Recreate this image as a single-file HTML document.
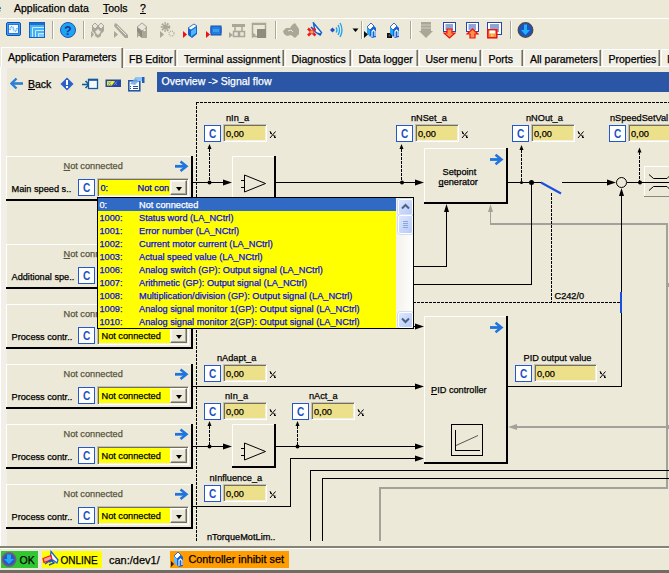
<!DOCTYPE html><html><head><meta charset="utf-8"><style>
html,body{margin:0;padding:0}
body{width:669px;height:573px;overflow:hidden;position:relative;background:#ECE9D8;font-family:"Liberation Sans", sans-serif;-webkit-font-smoothing:antialiased}
.t{position:absolute;white-space:pre;-webkit-text-stroke:0.25px currentColor}
.cb{position:absolute;width:15px;height:15px;border:1px solid #2258CC;background:#fff;color:#1B50C4;font-weight:bold;font-size:12.6px;line-height:16px;text-align:center}
.cb span{display:inline-block;transform:scaleX(0.8)}
.fld{position:absolute;height:18px;box-sizing:border-box;border-top:1px solid #C4C0AC;border-left:1px solid #C4C0AC;border-bottom:1px solid #fff;border-right:1px solid #fff;box-shadow:inset 1px 1px 0 #716F64, inset -1px -1px 0 #F1EFE2;background:#EDE08A}
.combo{position:absolute;height:19px;box-sizing:border-box;border-top:1px solid #C4C0AC;border-left:1px solid #C4C0AC;border-bottom:1px solid #fff;border-right:1px solid #fff;box-shadow:inset 1px 1px 0 #716F64, inset -1px -1px 0 #F1EFE2;background:#FFFF00}
.combo .dd{position:absolute;right:1px;top:1px;width:17px;height:15px;box-sizing:border-box;background:#ECE9D8;border-top:1px solid #fff;border-left:1px solid #fff;border-right:1px solid #716F64;border-bottom:1px solid #716F64;box-shadow:inset -1px -1px 0 #ACA899, inset 1px 1px 0 #F6F5EF}
.combo .dd:after{content:'';position:absolute;left:4.5px;top:5.5px;border-left:3.5px solid transparent;border-right:3.5px solid transparent;border-top:4px solid #000}
.sbtn{position:absolute;width:13px;background:linear-gradient(135deg,#DCE7FE,#B7CBF7);border:1px solid #fff;border-radius:2px;box-shadow:0 0 0 0.5px #B0C2EA}
svg{position:absolute;left:0;top:0}
u{text-decoration-skip-ink:none}
</style></head><body>
<div class="t " style="left:-5px;top:3.11px;font-size:10.5px;line-height:10.5px;color:#000;">e</div><div class="t " style="left:14px;top:3.11px;font-size:10.5px;line-height:10.5px;color:#000;">Application data</div><div class="t " style="left:103px;top:3.11px;font-size:10.5px;line-height:10.5px;color:#000;"><u>T</u>ools</div><div class="t " style="left:140px;top:3.11px;font-size:10.5px;line-height:10.5px;color:#000;"><u>?</u></div><div style="position:absolute;left:0px;top:18px;width:669px;height:1px;background:#fff"></div><div style="position:absolute;left:52px;top:21px;width:1px;height:18px;background:#ACA899"></div><div style="position:absolute;left:53px;top:21px;width:1px;height:18px;background:#fff"></div><div style="position:absolute;left:83px;top:21px;width:1px;height:18px;background:#ACA899"></div><div style="position:absolute;left:84px;top:21px;width:1px;height:18px;background:#fff"></div><div style="position:absolute;left:275px;top:21px;width:1px;height:18px;background:#ACA899"></div><div style="position:absolute;left:276px;top:21px;width:1px;height:18px;background:#fff"></div><div style="position:absolute;left:361px;top:21px;width:1px;height:18px;background:#ACA899"></div><div style="position:absolute;left:362px;top:21px;width:1px;height:18px;background:#fff"></div><div style="position:absolute;left:410px;top:21px;width:1px;height:18px;background:#ACA899"></div><div style="position:absolute;left:411px;top:21px;width:1px;height:18px;background:#fff"></div><div style="position:absolute;left:510px;top:21px;width:1px;height:18px;background:#ACA899"></div><div style="position:absolute;left:511px;top:21px;width:1px;height:18px;background:#fff"></div><svg style="position:absolute;left:6px;top:22px" width="16" height="15" viewBox="0 0 16 15"><rect x="0.5" y="0.5" width="14" height="13" rx="1.5" fill="#3AA2F2" stroke="#0F4FB8"/><rect x="2.5" y="2.5" width="10" height="9" fill="#F4FAFF" stroke="#1560C8" stroke-width="0.8"/><path d="M4,8 C4,4 7.5,4 7.5,7 C7.5,10 11,10 11,6" stroke="#5AAEF0" stroke-width="1.6" fill="none" stroke-dasharray="1 0.6"/></svg><svg style="position:absolute;left:29px;top:22px" width="17" height="17" viewBox="0 0 17 17"><rect x="0.5" y="0.5" width="15" height="15" fill="#47B2F4" stroke="#1A5CC0"/><rect x="1" y="1" width="14" height="2" fill="#1A6FD0"/><path d="M3.5,15V5.5H15M6.5,15V8.5H15M9.5,15V11.5H15" stroke="#C6EBFF" stroke-width="1" fill="none"/><rect x="10" y="12" width="5" height="3" fill="#7CCBFA"/></svg><svg style="position:absolute;left:60px;top:22px" width="17" height="17" viewBox="0 0 17 17"><circle cx="8" cy="8" r="7.5" fill="#18A6F2" stroke="#2350B8"/><text x="8" y="12.5" font-family="Liberation Sans" font-weight="bold" font-size="12" text-anchor="middle" fill="#2B2A8C">?</text></svg><svg style="position:absolute;left:90px;top:22px" width="17" height="17" viewBox="0 0 17 17"><path d="M5,1L8,4L5,7L2,4Z M11,1L14,4L11,7L8,4Z" fill="#E9E7DD" stroke="#A9A797"/><path d="M2,4V9L5,12L8,9L11,12L14,9V4L11,7L8,4L5,7Z" fill="#A9A797"/><path d="M8,7L11,10L8,13L5,10Z" fill="#E9E7DD"/><path d="M5,10V14L8,16L11,14V10L8,13Z" fill="#A9A797"/><path d="M1,9L4,12.5L1,16Z" fill="#A9A797"/></svg><svg style="position:absolute;left:113px;top:22px" width="17" height="17" viewBox="0 0 17 17"><path d="M2,1L4,2L15,13L15,16L12,16L1,4Z" fill="#A9A797"/><path d="M4,4L13,13" stroke="#E9E7DD" stroke-width="1"/><path d="M1,9L5,12.5L1,16Z" fill="#A9A797"/></svg><svg style="position:absolute;left:136px;top:22px" width="15" height="17" viewBox="0 0 15 17"><path d="M6,1L11,5L11,16L6,12Z" fill="#A9A797"/><path d="M1,5L6,1L11,5L6,9Z" fill="#E9E7DD" stroke="#A9A797"/><path d="M1,5L6,9L6,16L1,12Z" fill="#8E8C7E"/><path d="M6,9L11,5V16L6,16Z" fill="#A9A797"/><circle cx="8.5" cy="8" r="1.2" fill="#E9E7DD"/><path d="M1,9L4,12.5L1,16Z" fill="#A9A797"/></svg><svg style="position:absolute;left:159px;top:22px" width="17" height="17" viewBox="0 0 17 17"><circle cx="6.5" cy="5" r="3.5" fill="none" stroke="#A9A797" stroke-width="2.5" stroke-dasharray="1.5 1"/><circle cx="6.5" cy="5" r="2.5" fill="#A9A797"/><circle cx="12.5" cy="11.5" r="2.5" fill="none" stroke="#A9A797" stroke-width="1.2" stroke-dasharray="1 1"/><path d="M1,9L5,12.5L1,16Z" fill="#A9A797"/></svg><svg style="position:absolute;left:182px;top:22px" width="17" height="17" viewBox="0 0 17 17"><path d="M1,9L5,12.5L1,16Z" fill="#F01010"/><path d="M6,6L12,2L15,4V12L10,16L6,13Z" fill="#1563D0"/><path d="M6,6L12,2L15,4L9,8Z" fill="#fff" stroke="#1563D0" stroke-width="0.8"/><path d="M9,9L14,5.5V11L9,14.5Z" fill="#4FB8F8"/></svg><svg style="position:absolute;left:205px;top:22px" width="17" height="17" viewBox="0 0 17 17"><path d="M1,9L5,12.5L1,16Z" fill="#F01010"/><rect x="6" y="4" width="10" height="9" fill="#1D7FE0" stroke="#1A4FB0" stroke-width="1"/><path d="M5,6H6M5,8H6M5,10H6M16,6H17M16,8H17M16,10H17" stroke="#1A4FB0"/><rect x="8" y="7" width="6" height="3" fill="#3E9AF0"/></svg><svg style="position:absolute;left:228px;top:22px" width="18" height="17" viewBox="0 0 18 17"><rect x="4" y="2" width="13" height="3" fill="#A9A797"/><path d="M7,5V9M14,5V9" stroke="#A9A797" stroke-width="1.5"/><rect x="5.5" y="9.5" width="5" height="5" fill="#E9E7DD" stroke="#A9A797" stroke-width="1.5"/><rect x="11.5" y="9.5" width="5" height="5" fill="#E9E7DD" stroke="#A9A797" stroke-width="1.5"/><path d="M1,10L5,13L1,16Z" fill="#A9A797"/></svg><svg style="position:absolute;left:251px;top:22px" width="17" height="17" viewBox="0 0 17 17"><rect x="1.5" y="1.5" width="13" height="13" fill="none" stroke="#A9A797" stroke-width="1.5"/><rect x="1" y="1" width="14" height="2" fill="#A9A797"/><rect x="6" y="7" width="9" height="9" fill="#8E8C7E"/><path d="M1,10L5,13L1,16Z" fill="#A9A797"/></svg><svg style="position:absolute;left:282px;top:22px" width="18" height="16" viewBox="0 0 18 16"><path d="M1,9L4,6H8L10,3L13,1L17,7L17,12L13,16L9,13L5,14L2,12Z" fill="#A9A797"/><path d="M6,9L9,8L11,10" stroke="#E9E7DD" stroke-width="1" fill="none"/></svg><svg style="position:absolute;left:306px;top:22px" width="17" height="15" viewBox="0 0 17 15"><path d="M7.5,1L15.5,10.5L14,13L9,9.5Z" fill="#fff" stroke="#1167D8" stroke-width="1.5"/><path d="M5,5L8,8" stroke="#1A4FB0" stroke-width="1.6"/><path d="M12,11L15,13" stroke="#1A4FB0" stroke-width="1.4"/><path d="M2,6.5L9.5,13.5M9.5,6.5L2,13.5" stroke="#F01818" stroke-width="2.6"/><rect x="4.3" y="8.5" width="3" height="3" fill="#F5A070"/></svg><svg style="position:absolute;left:329px;top:22px" width="15" height="17" viewBox="0 0 15 17"><path d="M1,8L3.5,5.5L6,8L3.5,10.5Z" fill="#2050C0"/><path d="M7,5.5Q9,8 7,10.5M9,3Q12,8 9,13M11,1Q15,8 11,15" stroke="#1AA0F2" stroke-width="1.3" fill="none"/></svg><svg style="position:absolute;left:352px;top:28px" width="7" height="5" viewBox="0 0 7 5"><path d="M0.5,0.5H6.5L3.5,4Z" fill="#000"/></svg><svg style="position:absolute;left:363px;top:22px" width="15" height="17" viewBox="0 0 15 17"><path d="M1,9L5,12.5L1,16Z" fill="#111"/><path d="M4,5L8,1L13,6L13,15L9,16L4,11Z" fill="#1565D6"/><path d="M4,5L8,1L11,4L7,8Z" fill="#fff" stroke="#1D4FB8" stroke-width="0.8"/><path d="M4,5L7,8L7,15L4,11Z" fill="#20A8F5"/><path d="M9,15V9.5L10.5,8L12,9.5V14" stroke="#fff" stroke-width="1.1" fill="none"/></svg><svg style="position:absolute;left:386px;top:22px" width="15" height="17" viewBox="0 0 15 17"><rect x="1" y="11" width="5" height="5" fill="#111"/><rect x="2.5" y="12.5" width="2" height="2" fill="#555"/><path d="M4,5L8,1L13,6L13,15L9,16L4,11Z" fill="#1565D6"/><path d="M4,5L8,1L11,4L7,8Z" fill="#fff" stroke="#1D4FB8" stroke-width="0.8"/><path d="M4,5L7,8L7,15L4,11Z" fill="#20A8F5"/><path d="M9,15V9.5L10.5,8L12,9.5V14" stroke="#fff" stroke-width="1.1" fill="none"/></svg><svg style="position:absolute;left:419px;top:22px" width="14" height="17" viewBox="0 0 14 17"><rect x="2" y="0" width="10" height="10" fill="#A9A797"/><path d="M2,3H12M2,6H12" stroke="#E9E7DD" stroke-width="0.6"/><path d="M0,9H14L7,16Z" fill="#A9A797"/></svg><svg style="position:absolute;left:443px;top:22px" width="13" height="17" viewBox="0 0 13 17"><rect x="0.5" y="0.5" width="12" height="9" fill="#fff" stroke="#2548A8"/><path d="M3,3H10M3,5H10M3,7H10" stroke="#2548A8" stroke-width="1"/><path d="M2,3H2.5M2,5H2.5M2,7H2.5" stroke="#2548A8"/><path d="M4,7H9V11H12L6.5,16L1,11H4Z" fill="#F5924A" stroke="#F01010" stroke-width="1.2"/></svg><svg style="position:absolute;left:466px;top:22px" width="13" height="17" viewBox="0 0 13 17"><rect x="0.5" y="0.5" width="12" height="9" fill="#fff" stroke="#2548A8"/><path d="M3,3H10M3,5H10M3,7H10" stroke="#2548A8" stroke-width="1"/><path d="M2,3H2.5M2,5H2.5M2,7H2.5" stroke="#2548A8"/><path d="M6.5,7L12,12H9V16H4V12H1Z" fill="#F5924A" stroke="#F01010" stroke-width="1.2"/></svg><svg style="position:absolute;left:487px;top:22px" width="16" height="17" viewBox="0 0 16 17"><rect x="0.5" y="0.5" width="14" height="12" fill="#fff" stroke="#2548A8"/><path d="M3,3H12M3,5H12M3,7H12M3,9H12" stroke="#2548A8" stroke-width="1"/><rect x="0.8" y="7.8" width="9" height="8" fill="#F5924A" stroke="#F01010" stroke-width="1.5"/><rect x="2.5" y="8.5" width="5.5" height="3" fill="#fff"/><rect x="4" y="12.5" width="2.5" height="2" fill="#FFE040"/></svg><svg style="position:absolute;left:517px;top:22px" width="17" height="17" viewBox="0 0 17 17"><circle cx="8.5" cy="8" r="7.2" fill="#1C52C2" stroke="#4A4A50" stroke-width="1.5"/><path d="M7,2.5H10V8H13L8.5,13L4,8H7Z" fill="#1EB0F8"/></svg><svg style="position:absolute;left:10px;top:77px" width="14" height="13" viewBox="0 0 14 13"><path d="M1,6.5H13" stroke="#2A7ED8" stroke-width="2.6"/><path d="M6.5,1.5L1.5,6.5L6.5,11.5" stroke="#2A7ED8" stroke-width="2.4" fill="none"/></svg><svg style="position:absolute;left:60px;top:77px" width="14" height="14" viewBox="0 0 14 14"><path d="M7,0.5L13.5,7L7,13.5L0.5,7Z" fill="#2B5FCB"/><rect x="6" y="3" width="2" height="5" fill="#fff"/><rect x="6" y="9" width="2" height="2" fill="#fff"/></svg><svg style="position:absolute;left:81px;top:78px" width="18" height="12" viewBox="0 0 18 12"><path d="M1,6.5H8" stroke="#135A9C" stroke-width="1.6"/><path d="M4.5,3L8,6.5L4.5,10" stroke="#135A9C" stroke-width="1.6" fill="none"/><rect x="7.5" y="1.5" width="9" height="9" fill="#F4F8FC" stroke="#135A9C" stroke-width="1.3"/><rect x="7" y="0.8" width="10" height="2" fill="#135A9C"/></svg><svg style="position:absolute;left:105px;top:79px" width="17" height="9" viewBox="0 0 17 9"><rect x="0.5" y="0.5" width="15.5" height="7.5" fill="#2447A0"/><path d="M2,2H10L7,6.5H2Z" fill="#F4F020"/><path d="M3,2.5L6,6M6,2.5L3,6M9,2.5L12,6M12,2.5L9,6" stroke="#6F8FD8" stroke-width="0.9"/></svg><svg style="position:absolute;left:127px;top:76px" width="18" height="16" viewBox="0 0 18 16"><rect x="1.8" y="4.8" width="11" height="10" fill="#fff" stroke="#1F4FA0" stroke-width="1.5"/><path d="M3,10.5H4M6,10.5H11M3,12.5H4M6,12.5H11" stroke="#1F4FA0" stroke-width="1"/><path d="M3,8L9,1L12,5L8,9Z" fill="#6FA8E8" opacity="0.85"/><path d="M8,1H16V5H11Z" fill="#8FC4F8"/><rect x="15" y="1" width="2.5" height="6" fill="#1F5FB8"/></svg><div style="position:absolute;left:1px;top:47px;width:121px;height:21px;background:#EFEDE4;border-top:1px solid #fff;border-left:1px solid #fff;box-sizing:border-box"></div><div style="position:absolute;left:122px;top:48px;width:1px;height:20px;background:#716F64"></div><div style="position:absolute;left:121px;top:48px;width:1px;height:20px;background:#ACA899"></div><div class="t " style="left:8px;top:51.61px;font-size:10.5px;line-height:10.5px;color:#000;">Application Parameters</div><div style="position:absolute;left:124px;top:49px;width:51px;height:17px;background:#F1EFE6;border-top:1px solid #fff;border-left:1px solid #fff;box-sizing:border-box"></div><div style="position:absolute;left:175px;top:50px;width:1px;height:17px;background:#716F64"></div><div style="position:absolute;left:174px;top:50px;width:1px;height:17px;background:#ACA899"></div><div class="t " style="left:129px;top:54.11px;font-size:10.5px;line-height:10.5px;color:#000;">FB Editor</div><div style="position:absolute;left:177px;top:49px;width:106px;height:17px;background:#F1EFE6;border-top:1px solid #fff;border-left:1px solid #fff;box-sizing:border-box"></div><div style="position:absolute;left:283px;top:50px;width:1px;height:17px;background:#716F64"></div><div style="position:absolute;left:282px;top:50px;width:1px;height:17px;background:#ACA899"></div><div class="t " style="left:184px;top:54.11px;font-size:10.5px;line-height:10.5px;color:#000;">Terminal assignment</div><div style="position:absolute;left:285px;top:49px;width:65px;height:17px;background:#F1EFE6;border-top:1px solid #fff;border-left:1px solid #fff;box-sizing:border-box"></div><div style="position:absolute;left:350px;top:50px;width:1px;height:17px;background:#716F64"></div><div style="position:absolute;left:349px;top:50px;width:1px;height:17px;background:#ACA899"></div><div class="t " style="left:291.5px;top:54.11px;font-size:10.5px;line-height:10.5px;color:#000;">Diagnostics</div><div style="position:absolute;left:352px;top:49px;width:65px;height:17px;background:#F1EFE6;border-top:1px solid #fff;border-left:1px solid #fff;box-sizing:border-box"></div><div style="position:absolute;left:417px;top:50px;width:1px;height:17px;background:#716F64"></div><div style="position:absolute;left:416px;top:50px;width:1px;height:17px;background:#ACA899"></div><div class="t " style="left:358.5px;top:54.11px;font-size:10.5px;line-height:10.5px;color:#000;">Data logger</div><div style="position:absolute;left:419px;top:49px;width:61px;height:17px;background:#F1EFE6;border-top:1px solid #fff;border-left:1px solid #fff;box-sizing:border-box"></div><div style="position:absolute;left:480px;top:50px;width:1px;height:17px;background:#716F64"></div><div style="position:absolute;left:479px;top:50px;width:1px;height:17px;background:#ACA899"></div><div class="t " style="left:425.5px;top:54.11px;font-size:10.5px;line-height:10.5px;color:#000;">User menu</div><div style="position:absolute;left:482px;top:49px;width:40px;height:17px;background:#F1EFE6;border-top:1px solid #fff;border-left:1px solid #fff;box-sizing:border-box"></div><div style="position:absolute;left:522px;top:50px;width:1px;height:17px;background:#716F64"></div><div style="position:absolute;left:521px;top:50px;width:1px;height:17px;background:#ACA899"></div><div class="t " style="left:488.5px;top:54.11px;font-size:10.5px;line-height:10.5px;color:#000;">Ports</div><div style="position:absolute;left:524px;top:49px;width:76px;height:17px;background:#F1EFE6;border-top:1px solid #fff;border-left:1px solid #fff;box-sizing:border-box"></div><div style="position:absolute;left:600px;top:50px;width:1px;height:17px;background:#716F64"></div><div style="position:absolute;left:599px;top:50px;width:1px;height:17px;background:#ACA899"></div><div class="t " style="left:530px;top:54.11px;font-size:10.5px;line-height:10.5px;color:#000;">All parameters</div><div style="position:absolute;left:602px;top:49px;width:57px;height:17px;background:#F1EFE6;border-top:1px solid #fff;border-left:1px solid #fff;box-sizing:border-box"></div><div style="position:absolute;left:659px;top:50px;width:1px;height:17px;background:#716F64"></div><div style="position:absolute;left:658px;top:50px;width:1px;height:17px;background:#ACA899"></div><div class="t " style="left:608.5px;top:54.11px;font-size:10.5px;line-height:10.5px;color:#000;">Properties</div><div style="position:absolute;left:661px;top:49px;width:18px;height:17px;background:#F1EFE6;border-top:1px solid #fff;border-left:1px solid #fff;box-sizing:border-box"></div><div style="position:absolute;left:679px;top:50px;width:1px;height:17px;background:#716F64"></div><div style="position:absolute;left:678px;top:50px;width:1px;height:17px;background:#ACA899"></div><div class="t " style="left:667px;top:54.11px;font-size:10.5px;line-height:10.5px;color:#000;">I</div><div style="position:absolute;left:123px;top:66px;width:546px;height:1px;background:#fff"></div><div style="position:absolute;left:157px;top:72px;width:512px;height:20px;background:#2B56A6"></div><div class="t " style="left:161.5px;top:76.11px;font-size:10.5px;line-height:10.5px;color:#fff;">Overview -&gt; Signal flow</div><div class="t " style="left:28px;top:79.11px;font-size:10.5px;line-height:10.5px;color:#000;"><u>B</u>ack</div><div style="position:absolute;left:0px;top:93px;width:669px;height:453px;background:#ECE9D8"></div><div style="position:absolute;left:0px;top:67px;width:7px;height:479px;background:#F1EFE7"></div><div style="position:absolute;left:0px;top:67px;width:1px;height:479px;background:#fff"></div><div style="position:absolute;left:6px;top:156px;width:185px;height:44px;border-top:1px solid #fff;border-left:1px solid #fff;box-sizing:border-box"></div><div style="position:absolute;left:6px;top:199px;width:187px;height:2px;background:#000"></div><div style="position:absolute;left:191px;top:156px;width:2px;height:45px;background:#000"></div><div class="t " style="left:63.5px;top:161.81px;font-size:9.2px;line-height:9.2px;color:#57553F;"><u>N</u>ot connected</div><div class="t " style="left:11.5px;top:184.81px;font-size:9.2px;line-height:9.2px;color:#000;">Main speed s..</div><div class="cb" style="left:78px;top:179px"><span>C</span></div><div class="combo" style="left:97px;top:178px;width:92px"><div class="ci"></div><div class="dd"></div></div><div class="t " style="left:100.5px;top:183.81px;font-size:9.2px;line-height:9.2px;color:#0000CC;">0:</div><div class="t " style="left:137.5px;top:183.81px;font-size:9.2px;line-height:9.2px;color:#0000CC;">Not con</div><div style="position:absolute;left:6px;top:244px;width:185px;height:44px;border-top:1px solid #fff;border-left:1px solid #fff;box-sizing:border-box"></div><div style="position:absolute;left:6px;top:287px;width:187px;height:2px;background:#000"></div><div style="position:absolute;left:191px;top:244px;width:2px;height:45px;background:#000"></div><div class="t " style="left:63.5px;top:249.81px;font-size:9.2px;line-height:9.2px;color:#57553F;"><u>N</u>ot connected</div><div class="t " style="left:11.5px;top:272.81px;font-size:9.2px;line-height:9.2px;color:#000;">Additional spe..</div><div class="cb" style="left:78px;top:267px"><span>C</span></div><div style="position:absolute;left:6px;top:304px;width:185px;height:44px;border-top:1px solid #fff;border-left:1px solid #fff;box-sizing:border-box"></div><div style="position:absolute;left:6px;top:347px;width:187px;height:2px;background:#000"></div><div style="position:absolute;left:191px;top:304px;width:2px;height:45px;background:#000"></div><div class="t " style="left:63.5px;top:309.81px;font-size:9.2px;line-height:9.2px;color:#57553F;">Not connected</div><div class="t " style="left:11.5px;top:332.81px;font-size:9.2px;line-height:9.2px;color:#000;">Process contr..</div><div class="cb" style="left:78px;top:327px"><span>C</span></div><div class="combo" style="left:97px;top:326px;width:92px"><div class="ci"></div><div class="dd"></div></div><div class="t " style="left:101.5px;top:331.81px;font-size:9.2px;line-height:9.2px;color:#000;">Not connected</div><div style="position:absolute;left:6px;top:364px;width:185px;height:44px;border-top:1px solid #fff;border-left:1px solid #fff;box-sizing:border-box"></div><div style="position:absolute;left:6px;top:407px;width:187px;height:2px;background:#000"></div><div style="position:absolute;left:191px;top:364px;width:2px;height:45px;background:#000"></div><div class="t " style="left:63.5px;top:369.81px;font-size:9.2px;line-height:9.2px;color:#57553F;">Not connected</div><div class="t " style="left:11.5px;top:392.81px;font-size:9.2px;line-height:9.2px;color:#000;">Process contr..</div><div class="cb" style="left:78px;top:387px"><span>C</span></div><div class="combo" style="left:97px;top:386px;width:92px"><div class="ci"></div><div class="dd"></div></div><div class="t " style="left:101.5px;top:391.81px;font-size:9.2px;line-height:9.2px;color:#000;">Not connected</div><div style="position:absolute;left:6px;top:424px;width:185px;height:44px;border-top:1px solid #fff;border-left:1px solid #fff;box-sizing:border-box"></div><div style="position:absolute;left:6px;top:467px;width:187px;height:2px;background:#000"></div><div style="position:absolute;left:191px;top:424px;width:2px;height:45px;background:#000"></div><div class="t " style="left:63.5px;top:429.81px;font-size:9.2px;line-height:9.2px;color:#57553F;">Not connected</div><div class="t " style="left:11.5px;top:452.81px;font-size:9.2px;line-height:9.2px;color:#000;">Process contr..</div><div class="cb" style="left:78px;top:447px"><span>C</span></div><div class="combo" style="left:97px;top:446px;width:92px"><div class="ci"></div><div class="dd"></div></div><div class="t " style="left:101.5px;top:451.81px;font-size:9.2px;line-height:9.2px;color:#000;">Not connected</div><div style="position:absolute;left:6px;top:484px;width:185px;height:44px;border-top:1px solid #fff;border-left:1px solid #fff;box-sizing:border-box"></div><div style="position:absolute;left:6px;top:527px;width:187px;height:2px;background:#000"></div><div style="position:absolute;left:191px;top:484px;width:2px;height:45px;background:#000"></div><div class="t " style="left:63.5px;top:489.81px;font-size:9.2px;line-height:9.2px;color:#57553F;">Not connected</div><div class="t " style="left:11.5px;top:512.81px;font-size:9.2px;line-height:9.2px;color:#000;">Process contr..</div><div class="cb" style="left:78px;top:507px"><span>C</span></div><div class="combo" style="left:97px;top:506px;width:92px"><div class="ci"></div><div class="dd"></div></div><div class="t " style="left:101.5px;top:511.81px;font-size:9.2px;line-height:9.2px;color:#000;">Not connected</div><div class="t " style="left:226px;top:113.81px;font-size:9.2px;line-height:9.2px;color:#000;">nIn_a</div><div class="cb" style="left:204px;top:125px"><span>C</span></div><div class="fld" style="left:223px;top:124px;width:44px"></div><div class="t " style="left:226px;top:129.81px;font-size:9.2px;line-height:9.2px;color:#000;">0,00</div><svg style="position:absolute;left:269px;top:130px" width="8" height="9" viewBox="0 0 8 9"><path d="M1,8 L6.5,1.5 M1,2 L2.5,3.5 M1.5,1.5 L2,4 M5,6 L6.5,7.8 M6,5.5 L5.5,8 M1,1.5 L3,4.5 M4.5,5 L6.5,8" stroke="#000" stroke-width="1" fill="none"/></svg><div class="t " style="left:411px;top:113.81px;font-size:9.2px;line-height:9.2px;color:#000;">nNSet_a</div><div class="cb" style="left:396px;top:125px"><span>C</span></div><div class="fld" style="left:415px;top:124px;width:44px"></div><div class="t " style="left:418px;top:129.81px;font-size:9.2px;line-height:9.2px;color:#000;">0,00</div><svg style="position:absolute;left:461px;top:130px" width="8" height="9" viewBox="0 0 8 9"><path d="M1,8 L6.5,1.5 M1,2 L2.5,3.5 M1.5,1.5 L2,4 M5,6 L6.5,7.8 M6,5.5 L5.5,8 M1,1.5 L3,4.5 M4.5,5 L6.5,8" stroke="#000" stroke-width="1" fill="none"/></svg><div class="t " style="left:526px;top:113.81px;font-size:9.2px;line-height:9.2px;color:#000;">nNOut_a</div><div class="cb" style="left:512px;top:125px"><span>C</span></div><div class="fld" style="left:531px;top:124px;width:44px"></div><div class="t " style="left:534px;top:129.81px;font-size:9.2px;line-height:9.2px;color:#000;">0,00</div><svg style="position:absolute;left:577px;top:130px" width="8" height="9" viewBox="0 0 8 9"><path d="M1,8 L6.5,1.5 M1,2 L2.5,3.5 M1.5,1.5 L2,4 M5,6 L6.5,7.8 M6,5.5 L5.5,8 M1,1.5 L3,4.5 M4.5,5 L6.5,8" stroke="#000" stroke-width="1" fill="none"/></svg><div class="t " style="left:610px;top:113.81px;font-size:9.2px;line-height:9.2px;color:#000;">nSpeedSetVal</div><div class="cb" style="left:609px;top:125px"><span>C</span></div><div class="fld" style="left:628px;top:124px;width:60px"></div><div class="t " style="left:631px;top:129.81px;font-size:9.2px;line-height:9.2px;color:#000;">0,00</div><div class="t " style="left:217px;top:353.81px;font-size:9.2px;line-height:9.2px;color:#000;">nAdapt_a</div><div class="cb" style="left:204px;top:365px"><span>C</span></div><div class="fld" style="left:223px;top:364px;width:44px"></div><div class="t " style="left:226px;top:369.81px;font-size:9.2px;line-height:9.2px;color:#000;">0,00</div><svg style="position:absolute;left:269px;top:370px" width="8" height="9" viewBox="0 0 8 9"><path d="M1,8 L6.5,1.5 M1,2 L2.5,3.5 M1.5,1.5 L2,4 M5,6 L6.5,7.8 M6,5.5 L5.5,8 M1,1.5 L3,4.5 M4.5,5 L6.5,8" stroke="#000" stroke-width="1" fill="none"/></svg><div class="t " style="left:225px;top:391.81px;font-size:9.2px;line-height:9.2px;color:#000;">nIn_a</div><div class="cb" style="left:204px;top:403px"><span>C</span></div><div class="fld" style="left:223px;top:402px;width:44px"></div><div class="t " style="left:226px;top:407.81px;font-size:9.2px;line-height:9.2px;color:#000;">0,00</div><svg style="position:absolute;left:269px;top:408px" width="8" height="9" viewBox="0 0 8 9"><path d="M1,8 L6.5,1.5 M1,2 L2.5,3.5 M1.5,1.5 L2,4 M5,6 L6.5,7.8 M6,5.5 L5.5,8 M1,1.5 L3,4.5 M4.5,5 L6.5,8" stroke="#000" stroke-width="1" fill="none"/></svg><div class="t " style="left:309px;top:391.81px;font-size:9.2px;line-height:9.2px;color:#000;">nAct_a</div><div class="cb" style="left:292px;top:403px"><span>C</span></div><div class="fld" style="left:311px;top:402px;width:44px"></div><div class="t " style="left:314px;top:407.81px;font-size:9.2px;line-height:9.2px;color:#000;">0,00</div><svg style="position:absolute;left:357px;top:408px" width="8" height="9" viewBox="0 0 8 9"><path d="M1,8 L6.5,1.5 M1,2 L2.5,3.5 M1.5,1.5 L2,4 M5,6 L6.5,7.8 M6,5.5 L5.5,8 M1,1.5 L3,4.5 M4.5,5 L6.5,8" stroke="#000" stroke-width="1" fill="none"/></svg><div class="t " style="left:209.5px;top:473.81px;font-size:9.2px;line-height:9.2px;color:#000;">nInfluence_a</div><div class="cb" style="left:204px;top:485px"><span>C</span></div><div class="fld" style="left:223px;top:484px;width:44px"></div><div class="t " style="left:226px;top:489.81px;font-size:9.2px;line-height:9.2px;color:#000;">0,00</div><svg style="position:absolute;left:269px;top:490px" width="8" height="9" viewBox="0 0 8 9"><path d="M1,8 L6.5,1.5 M1,2 L2.5,3.5 M1.5,1.5 L2,4 M5,6 L6.5,7.8 M6,5.5 L5.5,8 M1,1.5 L3,4.5 M4.5,5 L6.5,8" stroke="#000" stroke-width="1" fill="none"/></svg><div class="t " style="left:523.5px;top:353.81px;font-size:9.2px;line-height:9.2px;color:#000;">PID output value</div><div class="cb" style="left:515px;top:365px"><span>C</span></div><div class="fld" style="left:534px;top:364px;width:63px"></div><div class="t " style="left:537px;top:369.81px;font-size:9.2px;line-height:9.2px;color:#000;">0,00</div><svg style="position:absolute;left:599px;top:370px" width="8" height="9" viewBox="0 0 8 9"><path d="M1,8 L6.5,1.5 M1,2 L2.5,3.5 M1.5,1.5 L2,4 M5,6 L6.5,7.8 M6,5.5 L5.5,8 M1,1.5 L3,4.5 M4.5,5 L6.5,8" stroke="#000" stroke-width="1" fill="none"/></svg><div class="t " style="left:207px;top:532.81px;font-size:9.2px;line-height:9.2px;color:#000;">nTorqueMotLim..</div><div class="t " style="left:554.5px;top:291.81px;font-size:9.2px;line-height:9.2px;color:#000;">C242/0</div><div style="position:absolute;left:232px;top:156px;width:44px;height:49px;border-top:1px solid #fff;border-left:1px solid #fff;box-sizing:border-box"></div><div style="position:absolute;left:274px;top:156px;width:2px;height:51px;background:#000"></div><div style="position:absolute;left:232px;top:205px;width:44px;height:2px;background:#000"></div><div style="position:absolute;left:232px;top:424px;width:44px;height:42px;border-top:1px solid #fff;border-left:1px solid #fff;box-sizing:border-box"></div><div style="position:absolute;left:274px;top:424px;width:2px;height:44px;background:#000"></div><div style="position:absolute;left:232px;top:466px;width:44px;height:2px;background:#000"></div><div style="position:absolute;left:424px;top:148px;width:84px;height:54px;border-top:1px solid #fff;border-left:1px solid #fff;box-sizing:border-box"></div><div style="position:absolute;left:506px;top:148px;width:2px;height:56px;background:#000"></div><div style="position:absolute;left:424px;top:202px;width:84px;height:2px;background:#000"></div><div style="position:absolute;left:424px;top:316px;width:84px;height:146px;border-top:1px solid #fff;border-left:1px solid #fff;box-sizing:border-box"></div><div style="position:absolute;left:506px;top:316px;width:2px;height:148px;background:#000"></div><div style="position:absolute;left:424px;top:462px;width:84px;height:2px;background:#000"></div><div style="position:absolute;left:644px;top:166px;width:30px;height:30px;border-top:1px solid #fff;border-left:1px solid #fff;box-sizing:border-box"></div><div class="t " style="left:442.5px;top:167.81px;font-size:9.2px;line-height:9.2px;color:#000;">Setpoint</div><div class="t " style="left:438.5px;top:177.81px;font-size:9.2px;line-height:9.2px;color:#000;"><u>g</u>enerator</div><div class="t " style="left:431px;top:385.81px;font-size:9.2px;line-height:9.2px;color:#000;"><u>P</u>ID controller</div><div style="position:absolute;left:666px;top:283px;width:3px;height:4px;background:#A3A29A"></div><div style="position:absolute;left:666px;top:425px;width:3px;height:4px;background:#A3A29A"></div><div style="position:absolute;left:0px;top:546px;width:669px;height:2px;background:#858375"></div><div style="position:absolute;left:0px;top:548px;width:669px;height:1px;background:#fff"></div><div style="position:absolute;left:1px;top:551px;width:37px;height:17px;background:#33C633"></div><div class="t " style="left:19.5px;top:555.11px;font-size:10.5px;line-height:10.5px;color:#000;">OK</div><div style="position:absolute;left:42px;top:551px;width:60px;height:17px;background:#FFFF00"></div><div class="t " style="left:60.5px;top:555.53px;font-size:10px;line-height:10px;color:#000;">ONLINE</div><div class="t " style="left:109px;top:554.69px;font-size:11px;line-height:11px;color:#000;">can:/dev1/</div><div style="position:absolute;left:170px;top:551px;width:119px;height:17px;background:#FF9C00"></div><div class="t " style="left:188.5px;top:554.36px;font-size:10.8px;line-height:10.8px;color:#000;">Controller inhibit set</div><div style="position:absolute;left:0px;top:570px;width:669px;height:3px;background:#6F6D62"></div><svg style="position:absolute;left:1px;top:551px" width="17" height="17" viewBox="0 0 17 17"><circle cx="8" cy="8.5" r="6.6" fill="#2A56BE" stroke="#6B5F88" stroke-width="1.8"/><path d="M6,3.5H10V8H13L8,13L3,8H6Z" fill="#1DAAF4"/></svg><svg style="position:absolute;left:42px;top:550px" width="17" height="17" viewBox="0 0 17 17"><path d="M9,1.5L16,10L15,13L11,10L8,12Z" fill="#fff" stroke="#1C64D0" stroke-width="1.3"/><path d="M1,8.5L9,5.5L10,9.5L2,12.5Z" fill="#F5A0A0" stroke="#F01818" stroke-width="1.3"/><path d="M3,14L9,10L12,13L7,15" stroke="#1A50C0" stroke-width="1.4" fill="none"/></svg><svg style="position:absolute;left:170px;top:551px" width="15" height="17" viewBox="0 0 15 17"><path d="M1,10L4,13L1,16Z" fill="#222"/><path d="M4,5L8,1L13,6L13,15L9,16L4,11Z" fill="#1565D6"/><path d="M4,5L8,1L11,4L7,8Z" fill="#fff" stroke="#1D4FB8" stroke-width="0.8"/><path d="M4,5L7,8L7,15L4,11Z" fill="#5FC0F8"/><path d="M9,15V9.5L10.5,8L12,9.5V14" stroke="#fff" stroke-width="1.1" fill="none"/></svg>
<svg width="669" height="573" viewBox="0 0 669 573" shape-rendering="crispEdges"><path d="M490.5,204 L488.0,212 L493.0,212 Z" fill="#A3A29A" stroke="none" stroke-width="1" shape-rendering="geometricPrecision"/><line x1="490.5" y1="211" x2="490.5" y2="224" stroke="#A3A29A" stroke-width="1"/><line x1="490" y1="224.0" x2="667" y2="224.0" stroke="#A3A29A" stroke-width="2"/><line x1="667.0" y1="223" x2="667.0" y2="488" stroke="#A3A29A" stroke-width="2"/><line x1="516" y1="427.0" x2="666" y2="427.0" stroke="#A3A29A" stroke-width="2"/><path d="M508,427 L517,424 L517,430 Z" fill="#A3A29A" stroke="none" stroke-width="1" shape-rendering="geometricPrecision"/><line x1="380" y1="488.0" x2="668" y2="488.0" stroke="#A3A29A" stroke-width="2"/><line x1="380.0" y1="487" x2="380.0" y2="541" stroke="#A3A29A" stroke-width="2"/><line x1="196" y1="102.5" x2="669" y2="102.5" stroke="#000" stroke-width="1" stroke-dasharray="3,1"/><line x1="196.5" y1="102" x2="196.5" y2="541" stroke="#000" stroke-width="1" stroke-dasharray="3,1"/><line x1="192" y1="182.5" x2="224" y2="182.5" stroke="#000" stroke-width="1"/><path d="M232,182.5 L223,179.5 L223,185.5 Z" fill="#000" stroke="none" stroke-width="1" shape-rendering="geometricPrecision"/><circle cx="209.5" cy="182.5" r="2" fill="#000" shape-rendering="geometricPrecision"/><line x1="209.5" y1="149" x2="209.5" y2="182" stroke="#000" stroke-width="1" stroke-dasharray="3,1"/><path d="M209.5,144 L207.5,149 L211.5,149 Z" fill="#000" stroke="none" stroke-width="1" shape-rendering="geometricPrecision"/><line x1="275" y1="182.5" x2="416" y2="182.5" stroke="#000" stroke-width="1"/><path d="M424,182.5 L415,179.5 L415,185.5 Z" fill="#000" stroke="none" stroke-width="1" shape-rendering="geometricPrecision"/><circle cx="402" cy="182.5" r="2" fill="#000" shape-rendering="geometricPrecision"/><line x1="401.5" y1="149" x2="401.5" y2="182" stroke="#000" stroke-width="1" stroke-dasharray="3,1"/><path d="M401.5,144 L399.5,149 L403.5,149 Z" fill="#000" stroke="none" stroke-width="1" shape-rendering="geometricPrecision"/><line x1="507" y1="182.5" x2="541" y2="182.5" stroke="#000" stroke-width="1"/><circle cx="521.5" cy="182.5" r="1.5" fill="#000" shape-rendering="geometricPrecision"/><line x1="521.5" y1="150" x2="521.5" y2="182" stroke="#000" stroke-width="1" stroke-dasharray="3,1"/><path d="M521.5,145 L519.5,150 L523.5,150 Z" fill="#000" stroke="none" stroke-width="1" shape-rendering="geometricPrecision"/><circle cx="531.5" cy="182.5" r="2.5" fill="#000" shape-rendering="geometricPrecision"/><line x1="531.5" y1="182" x2="531.5" y2="285" stroke="#000" stroke-width="1"/><line x1="413" y1="284.5" x2="532" y2="284.5" stroke="#000" stroke-width="1"/><path d="M541,182.5 L561,193.5" fill="none" stroke="#1A4FE0" stroke-width="2" shape-rendering="geometricPrecision"/><line x1="551.5" y1="193" x2="551.5" y2="302" stroke="#000" stroke-width="1" stroke-dasharray="3,1"/><line x1="413" y1="302.5" x2="621" y2="302.5" stroke="#000" stroke-width="1" stroke-dasharray="3,1"/><line x1="562" y1="182.5" x2="608" y2="182.5" stroke="#000" stroke-width="1"/><path d="M616,182.5 L607,179.5 L607,185.5 Z" fill="#000" stroke="none" stroke-width="1" shape-rendering="geometricPrecision"/><circle cx="621.5" cy="182.5" r="5" fill="none" stroke="#000" stroke-width="1" shape-rendering="geometricPrecision"/><line x1="627" y1="182.5" x2="644" y2="182.5" stroke="#000" stroke-width="1"/><circle cx="640" cy="182.5" r="2" fill="#000" shape-rendering="geometricPrecision"/><line x1="639.5" y1="152" x2="639.5" y2="182" stroke="#000" stroke-width="1" stroke-dasharray="3,1"/><path d="M639.5,147.5 L637.5,152.5 L641.5,152.5 Z" fill="#000" stroke="none" stroke-width="1" shape-rendering="geometricPrecision"/><line x1="621.5" y1="196" x2="621.5" y2="386" stroke="#000" stroke-width="1"/><path d="M621.5,188 L619.0,196 L624.0,196 Z" fill="#000" stroke="none" stroke-width="1" shape-rendering="geometricPrecision"/><line x1="507" y1="386.5" x2="622" y2="386.5" stroke="#000" stroke-width="1"/><line x1="621.0" y1="292" x2="621.0" y2="313" stroke="#1A4FE0" stroke-width="2"/><line x1="413" y1="266.5" x2="447" y2="266.5" stroke="#000" stroke-width="1"/><line x1="446.5" y1="211" x2="446.5" y2="266" stroke="#000" stroke-width="1"/><path d="M446.5,204 L444.0,212 L449.0,212 Z" fill="#000" stroke="none" stroke-width="1" shape-rendering="geometricPrecision"/><line x1="413" y1="326.5" x2="416" y2="326.5" stroke="#000" stroke-width="1"/><path d="M424,326.5 L415,323.5 L415,329.5 Z" fill="#000" stroke="none" stroke-width="1" shape-rendering="geometricPrecision"/><line x1="192" y1="386.5" x2="416" y2="386.5" stroke="#000" stroke-width="1"/><path d="M424,386.5 L415,383.5 L415,389.5 Z" fill="#000" stroke="none" stroke-width="1" shape-rendering="geometricPrecision"/><line x1="192" y1="446.5" x2="224" y2="446.5" stroke="#000" stroke-width="1"/><path d="M232,446.5 L223,443.5 L223,449.5 Z" fill="#000" stroke="none" stroke-width="1" shape-rendering="geometricPrecision"/><circle cx="209.5" cy="446.5" r="2" fill="#000" shape-rendering="geometricPrecision"/><line x1="209.5" y1="426" x2="209.5" y2="446" stroke="#000" stroke-width="1" stroke-dasharray="3,1"/><path d="M209.5,421 L207.5,426 L211.5,426 Z" fill="#000" stroke="none" stroke-width="1" shape-rendering="geometricPrecision"/><line x1="275" y1="446.5" x2="416" y2="446.5" stroke="#000" stroke-width="1"/><path d="M424,446.5 L415,443.5 L415,449.5 Z" fill="#000" stroke="none" stroke-width="1" shape-rendering="geometricPrecision"/><circle cx="297.5" cy="446.5" r="2" fill="#000" shape-rendering="geometricPrecision"/><line x1="297.5" y1="426" x2="297.5" y2="446" stroke="#000" stroke-width="1" stroke-dasharray="3,1"/><path d="M297.5,421 L295.5,426 L299.5,426 Z" fill="#000" stroke="none" stroke-width="1" shape-rendering="geometricPrecision"/><line x1="192" y1="506.5" x2="290" y2="506.5" stroke="#000" stroke-width="1"/><line x1="290.5" y1="458" x2="290.5" y2="507" stroke="#000" stroke-width="1"/><line x1="290" y1="458.5" x2="416" y2="458.5" stroke="#000" stroke-width="1"/><path d="M424,458.5 L415,455.5 L415,461.5 Z" fill="#000" stroke="none" stroke-width="1" shape-rendering="geometricPrecision"/><line x1="310.5" y1="470" x2="310.5" y2="541" stroke="#000" stroke-width="1"/><line x1="310" y1="470.5" x2="669" y2="470.5" stroke="#000" stroke-width="1"/><line x1="322.5" y1="478" x2="322.5" y2="541" stroke="#000" stroke-width="1"/><line x1="322" y1="478.5" x2="669" y2="478.5" stroke="#000" stroke-width="1"/><path d="M244.5,175 L265.5,183.5 L244.5,192 Z" fill="none" stroke="#000" stroke-width="1" shape-rendering="geometricPrecision"/><line x1="241" y1="180.5" x2="244" y2="180.5" stroke="#000" stroke-width="1"/><line x1="241" y1="187.5" x2="244" y2="187.5" stroke="#000" stroke-width="1"/><path d="M244.5,443 L265.5,451.5 L244.5,460 Z" fill="none" stroke="#000" stroke-width="1" shape-rendering="geometricPrecision"/><line x1="241" y1="448.5" x2="244" y2="448.5" stroke="#000" stroke-width="1"/><line x1="241" y1="455.5" x2="244" y2="455.5" stroke="#000" stroke-width="1"/><path d="M175,166.3 L186,166.3" fill="none" stroke="#1F74E0" stroke-width="2.8" shape-rendering="geometricPrecision"/><path d="M180.5,161.5 L186.5,166.3 L180.5,171.10000000000002" fill="none" stroke="#1F74E0" stroke-width="2.5" shape-rendering="geometricPrecision" stroke-linejoin="miter"/><path d="M175,254.3 L186,254.3" fill="none" stroke="#1F74E0" stroke-width="2.8" shape-rendering="geometricPrecision"/><path d="M180.5,249.5 L186.5,254.3 L180.5,259.1" fill="none" stroke="#1F74E0" stroke-width="2.5" shape-rendering="geometricPrecision" stroke-linejoin="miter"/><path d="M175,314.3 L186,314.3" fill="none" stroke="#1F74E0" stroke-width="2.8" shape-rendering="geometricPrecision"/><path d="M180.5,309.5 L186.5,314.3 L180.5,319.1" fill="none" stroke="#1F74E0" stroke-width="2.5" shape-rendering="geometricPrecision" stroke-linejoin="miter"/><path d="M175,374.3 L186,374.3" fill="none" stroke="#1F74E0" stroke-width="2.8" shape-rendering="geometricPrecision"/><path d="M180.5,369.5 L186.5,374.3 L180.5,379.1" fill="none" stroke="#1F74E0" stroke-width="2.5" shape-rendering="geometricPrecision" stroke-linejoin="miter"/><path d="M175,434.3 L186,434.3" fill="none" stroke="#1F74E0" stroke-width="2.8" shape-rendering="geometricPrecision"/><path d="M180.5,429.5 L186.5,434.3 L180.5,439.1" fill="none" stroke="#1F74E0" stroke-width="2.5" shape-rendering="geometricPrecision" stroke-linejoin="miter"/><path d="M175,494.3 L186,494.3" fill="none" stroke="#1F74E0" stroke-width="2.8" shape-rendering="geometricPrecision"/><path d="M180.5,489.5 L186.5,494.3 L180.5,499.1" fill="none" stroke="#1F74E0" stroke-width="2.5" shape-rendering="geometricPrecision" stroke-linejoin="miter"/><path d="M490,159.5 L501,159.5" fill="none" stroke="#1F74E0" stroke-width="2.8" shape-rendering="geometricPrecision"/><path d="M495.5,154.7 L501.5,159.5 L495.5,164.3" fill="none" stroke="#1F74E0" stroke-width="2.5" shape-rendering="geometricPrecision" stroke-linejoin="miter"/><path d="M490,327.5 L501,327.5" fill="none" stroke="#1F74E0" stroke-width="2.8" shape-rendering="geometricPrecision"/><path d="M495.5,322.7 L501.5,327.5 L495.5,332.3" fill="none" stroke="#1F74E0" stroke-width="2.5" shape-rendering="geometricPrecision" stroke-linejoin="miter"/><path d="M649,174.5 L653.5,178.5 L667,178.5 L671,174.5" fill="none" stroke="#000" stroke-width="1" shape-rendering="geometricPrecision"/><path d="M649,190.5 L653.5,186.5 L667,186.5 L671,190.5" fill="none" stroke="#000" stroke-width="1" shape-rendering="geometricPrecision"/><line x1="644" y1="196.5" x2="669" y2="196.5" stroke="#8C8A7C" stroke-width="1"/><line x1="627" y1="182.5" x2="669" y2="182.5" stroke="#000" stroke-width="1"/><rect x="451.5" y="424.5" width="31" height="31" fill="none" stroke="#000" stroke-width="1"/><line x1="455.5" y1="430" x2="455.5" y2="451" stroke="#000" stroke-width="1"/><line x1="455" y1="450.5" x2="480" y2="450.5" stroke="#000" stroke-width="1"/><path d="M456,445.5 L478,435.5" fill="none" stroke="#555" stroke-width="1" shape-rendering="geometricPrecision"/></svg>
<div id="list" style="position:absolute;left:97px;top:197px;width:317px;height:132px;box-sizing:border-box;border:1px solid #000;background:#FFFF00;overflow:hidden"><div style="position:absolute;left:0;top:0;width:298px;height:13px;background:#316AC5"></div><div class="t" style="left:1.5px;top:2.71px;font-size:9.2px;line-height:9.2px;color:#fff">0:</div><div class="t" style="left:41px;top:2.71px;font-size:9.2px;line-height:9.2px;color:#fff">Not connected</div><div class="t" style="left:1.5px;top:15.71px;font-size:9.2px;line-height:9.2px;color:#0A0AE6">1000:</div><div class="t" style="left:41px;top:15.71px;font-size:9.2px;line-height:9.2px;color:#0A0AE6">Status word (LA_NCtrl)</div><div class="t" style="left:1.5px;top:28.71px;font-size:9.2px;line-height:9.2px;color:#0A0AE6">1001:</div><div class="t" style="left:41px;top:28.71px;font-size:9.2px;line-height:9.2px;color:#0A0AE6">Error number (LA_NCtrl)</div><div class="t" style="left:1.5px;top:41.71px;font-size:9.2px;line-height:9.2px;color:#0A0AE6">1002:</div><div class="t" style="left:41px;top:41.71px;font-size:9.2px;line-height:9.2px;color:#0A0AE6">Current motor current (LA_NCtrl)</div><div class="t" style="left:1.5px;top:54.71px;font-size:9.2px;line-height:9.2px;color:#0A0AE6">1003:</div><div class="t" style="left:41px;top:54.71px;font-size:9.2px;line-height:9.2px;color:#0A0AE6">Actual speed value (LA_NCtrl)</div><div class="t" style="left:1.5px;top:67.71px;font-size:9.2px;line-height:9.2px;color:#0A0AE6">1006:</div><div class="t" style="left:41px;top:67.71px;font-size:9.2px;line-height:9.2px;color:#0A0AE6">Analog switch (GP): Output signal (LA_NCtrl)</div><div class="t" style="left:1.5px;top:80.71px;font-size:9.2px;line-height:9.2px;color:#0A0AE6">1007:</div><div class="t" style="left:41px;top:80.71px;font-size:9.2px;line-height:9.2px;color:#0A0AE6">Arithmetic (GP): Output signal (LA_NCtrl)</div><div class="t" style="left:1.5px;top:93.71px;font-size:9.2px;line-height:9.2px;color:#0A0AE6">1008:</div><div class="t" style="left:41px;top:93.71px;font-size:9.2px;line-height:9.2px;color:#0A0AE6">Multiplication/division (GP): Output signal (LA_NCtrl)</div><div class="t" style="left:1.5px;top:106.71px;font-size:9.2px;line-height:9.2px;color:#0A0AE6">1009:</div><div class="t" style="left:41px;top:106.71px;font-size:9.2px;line-height:9.2px;color:#0A0AE6">Analog signal monitor 1(GP): Output signal (LA_NCtrl)</div><div class="t" style="left:1.5px;top:119.71px;font-size:9.2px;line-height:9.2px;color:#0A0AE6">1010:</div><div class="t" style="left:41px;top:119.71px;font-size:9.2px;line-height:9.2px;color:#0A0AE6">Analog signal monitor 2(GP): Output signal (LA_NCtrl)</div><div style="position:absolute;left:298px;top:0;width:17px;height:130px;background:linear-gradient(90deg,#F3F1EC,#FEFEFB)"></div><div class="sbtn" style="left:300px;top:1px;height:14px"><svg width="13" height="14" style="position:absolute;left:0;top:0"><path d="M3,8.5 L6.5,5 L10,8.5" stroke="#4D6185" stroke-width="2" fill="none"/></svg></div><div class="sbtn" style="left:300px;top:17px;height:17px"><svg width="13" height="17" style="position:absolute;left:0;top:0"><path d="M4,5.5H9M4,7.5H9M4,9.5H9M4,11.5H9" stroke="#8FA5E0" stroke-width="1" fill="none"/></svg></div><div class="sbtn" style="left:300px;top:114px;height:14px"><svg width="13" height="14" style="position:absolute;left:0;top:0"><path d="M3,5.5 L6.5,9 L10,5.5" stroke="#4D6185" stroke-width="2" fill="none"/></svg></div></div>

</body></html>
